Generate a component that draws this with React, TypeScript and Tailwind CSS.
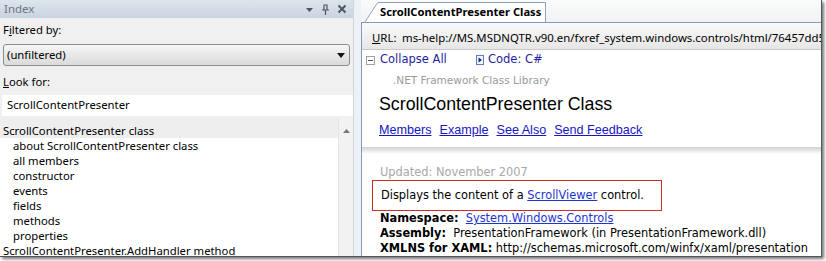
import React from 'react';

const listRows = [
  { text: 'ScrollContentPresenter class', indent: false, selected: true },
  { text: 'about ScrollContentPresenter class', indent: true },
  { text: 'all members', indent: true },
  { text: 'constructor', indent: true },
  { text: 'events', indent: true },
  { text: 'fields', indent: true },
  { text: 'methods', indent: true },
  { text: 'properties', indent: true },
  { text: 'ScrollContentPresenter.AddHandler method', indent: false },
];

const segoe = { fontFamily: '"Noto Sans", "Open Sans", sans-serif' };
const verdana = { fontFamily: '"DejaVu Sans", Verdana, sans-serif' };
const arial = { fontFamily: '"Liberation Sans", Arial, sans-serif' };

function IndexPane() {
  return (
    <div className="flex w-[353px] shrink-0 flex-col bg-[#f0f0f0] text-[11.3px] text-black" style={segoe}>
      {/* title bar */}
      <div className="flex h-[18px] items-center justify-between bg-gradient-to-b from-[#dde4ed] to-[#c9d3df] pl-[4px] pr-[6px]">
        <span className="text-[11.5px] text-[#6b7788]">Index</span>
        <div className="flex items-center gap-[7px]">
          <svg width="9" height="9" viewBox="0 0 9 9"><path d="M1 3h7L4.5 7z" fill="#4a5566" /></svg>
          <svg width="9" height="11" viewBox="0 0 9 11">
            <path d="M2.5 1h4M3 1v5M6 1v5M1 6h7M4.5 6v5" stroke="#4a5566" strokeWidth="1.2" fill="none" />
          </svg>
          <svg width="10" height="10" viewBox="0 0 10 10">
            <path d="M1.5 1.5l7 7M8.5 1.5l-7 7" stroke="#4a5566" strokeWidth="2" />
          </svg>
        </div>
      </div>

      <div className="mt-[1px] h-[22px] pl-[3px] leading-[22px]">
        F<span className="underline">i</span>ltered by:
      </div>
      <div className="mx-[3px] mt-[3px] flex h-[22px] items-center justify-between rounded-[3px] border border-[#8c8c8c] bg-gradient-to-b from-[#f6f6f6] to-[#dadada] pl-[3px] pr-[4px]">
        <span>(unfiltered)</span>
        <svg width="8" height="5" viewBox="0 0 8 5"><path d="M0 0h8L4 5z" fill="#111" /></svg>
      </div>

      <div className="mt-[5px] h-[22px] pl-[3px] leading-[22px]">
        <span className="underline">L</span>ook for:
      </div>
      <div className="ml-[2px] mt-[2px] flex h-[21px] items-center bg-white pl-[5px]">ScrollContentPresenter</div>

      <div className="mt-[2px] flex min-h-0 flex-1 bg-white">
        <div className="flex-1 overflow-hidden">
          {listRows.map((r, i) => (
            <div
              key={i}
              className={
                (r.selected ? 'h-[20px] bg-[#eeeeee] pt-[5px] ' : 'h-[15px] ') +
                (r.indent ? 'pl-[13px] ' : 'pl-[3px] ') +
                'whitespace-nowrap leading-[15px]'
              }
            >
              {r.text}
            </div>
          ))}
        </div>
        <div className="flex w-[15px] shrink-0 justify-center border-l border-[#e4e4e4] bg-[#f2f2f2] pt-[11px]">
          <svg width="7" height="4" viewBox="0 0 7 4"><path d="M0 4L3.5 0L7 4z" fill="#777" /></svg>
        </div>
      </div>
    </div>
  );
}

function DocPane() {
  return (
    <div className="flex min-w-0 flex-1 flex-col overflow-hidden bg-[#f5f6f8]">
      {/* tab strip */}
      <div className="flex h-[22px] shrink-0 items-end bg-gradient-to-b from-[#fbfbfb] to-[#f0f2f5] pl-[4px]">
        <div className="relative flex h-[20px] items-end">
          <svg width="14" height="20" viewBox="0 0 14 20" className="block">
            <path d="M0 20L12 1.5Q13 0.5 14 0.5V20z" fill="#ffffff" />
            <path d="M0 20L12 1.5Q13 0.5 14 0.5" stroke="#8fa2ba" fill="none" />
          </svg>
          <div
            className="flex h-[20px] items-center border-r border-t border-[#8fa2ba] bg-white pl-[1px] pr-[4px] text-[11.2px] font-bold"
            style={segoe}
          >
            ScrollContentPresenter Class
          </div>
        </div>
      </div>

      <div className="flex min-h-0 flex-1 flex-col border-l border-t border-[#7d9bbd] bg-white">
        {/* URL bar */}
        <div
          className="flex h-[27px] shrink-0 items-center whitespace-nowrap border-b border-[#c9c9c9] bg-gradient-to-b from-[#fafafa] to-[#e6e6e6] pl-[10px] pt-[3px] text-[11.4px]"
          style={segoe}
        >
          <span className="w-[30px] shrink-0">
            <span className="underline">U</span>RL:
          </span>
          <span>ms-help://MS.MSDNQTR.v90.en/fxref_system.windows.controls/html/76457dd5</span>
        </div>

        {/* header region */}
        <div className="shrink-0 bg-white">
          <div className="mt-[2px] flex h-[16px] items-center pl-[4px] text-[11.5px] text-[#1f1f9e]" style={verdana}>
            <svg width="9" height="9" viewBox="0 0 9 9" className="mr-[5px] shrink-0">
              <rect x="0.5" y="0.5" width="8" height="8" fill="#fff" stroke="#a0a0a0" />
              <path d="M2 4.5h5" stroke="#555" />
            </svg>
            <span className="w-[96px] shrink-0">Collapse All</span>
            <svg width="8" height="10" viewBox="0 0 8 10" className="mr-[4px] shrink-0">
              <rect x="0" y="0" width="8" height="10" fill="#5d7fbf" />
              <rect x="1" y="1" width="6" height="8" fill="#f2f5fb" />
              <path d="M2.5 2.5L6 5L2.5 7.5z" fill="#1a2a6a" />
            </svg>
            <span>Code: C#</span>
          </div>
          <div className="mt-[5px] pl-[31px] text-[10.5px] leading-[14px] text-[#9a9a9a]" style={verdana}>
            .NET Framework Class Library
          </div>
          <div className="mt-[5px] pl-[17px] text-[17.8px] leading-[24px] text-black" style={arial}>
            ScrollContentPresenter Class
          </div>
          <div className="mt-[6px] flex gap-[8px] pl-[17px] text-[12.6px] leading-[16px] text-[#1515c4]" style={arial}>
            <span className="underline">Members</span>
            <span className="underline">Example</span>
            <span className="underline">See Also</span>
            <span className="underline">Send Feedback</span>
          </div>
          <div className="mt-[9px] h-[7px] bg-gradient-to-b from-[#cfcfcf] to-white" />
        </div>

        {/* body */}
        <div className="px-[10px] text-[11.4px] leading-[15px]" style={verdana}>
          <div className="mt-[11px] pl-[8px] text-[#a8a8a8]">Updated: November 2007</div>
          <div className="w-[290px] border border-[#cc2b2b] py-[7px] pl-[8px]">
            Displays the content of a <span className="text-[#1d35d0] underline">ScrollViewer</span> control.
          </div>
          <div className="whitespace-nowrap pl-[8px]">
            <b>Namespace:</b>&nbsp; <span className="text-[#1d35d0] underline">System.Windows.Controls</span>
          </div>
          <div className="whitespace-nowrap pl-[8px]">
            <b>Assembly:</b>&nbsp; PresentationFramework (in PresentationFramework.dll)
          </div>
          <div className="whitespace-nowrap pl-[8px]">
            <b>XMLNS for XAML:</b> http://schemas.microsoft.com/winfx/xaml/presentation
          </div>
        </div>
      </div>
    </div>
  );
}

export default function App() {
  return (
    <div className="h-[261px] w-[826px] overflow-hidden bg-white">
      <div className="flex h-[257px] w-[822px] overflow-hidden border-b border-r border-[#555] shadow-[2px_2px_3px_rgba(0,0,0,0.55)]">
        <IndexPane />
        {/* splitter */}
        <div className="flex w-[8px] shrink-0 bg-[#eef1f6]">
          <div className="w-[1px] bg-[#d0d6de]" />
          <div className="flex-1" />
        </div>
        <DocPane />
      </div>
    </div>
  );
}
